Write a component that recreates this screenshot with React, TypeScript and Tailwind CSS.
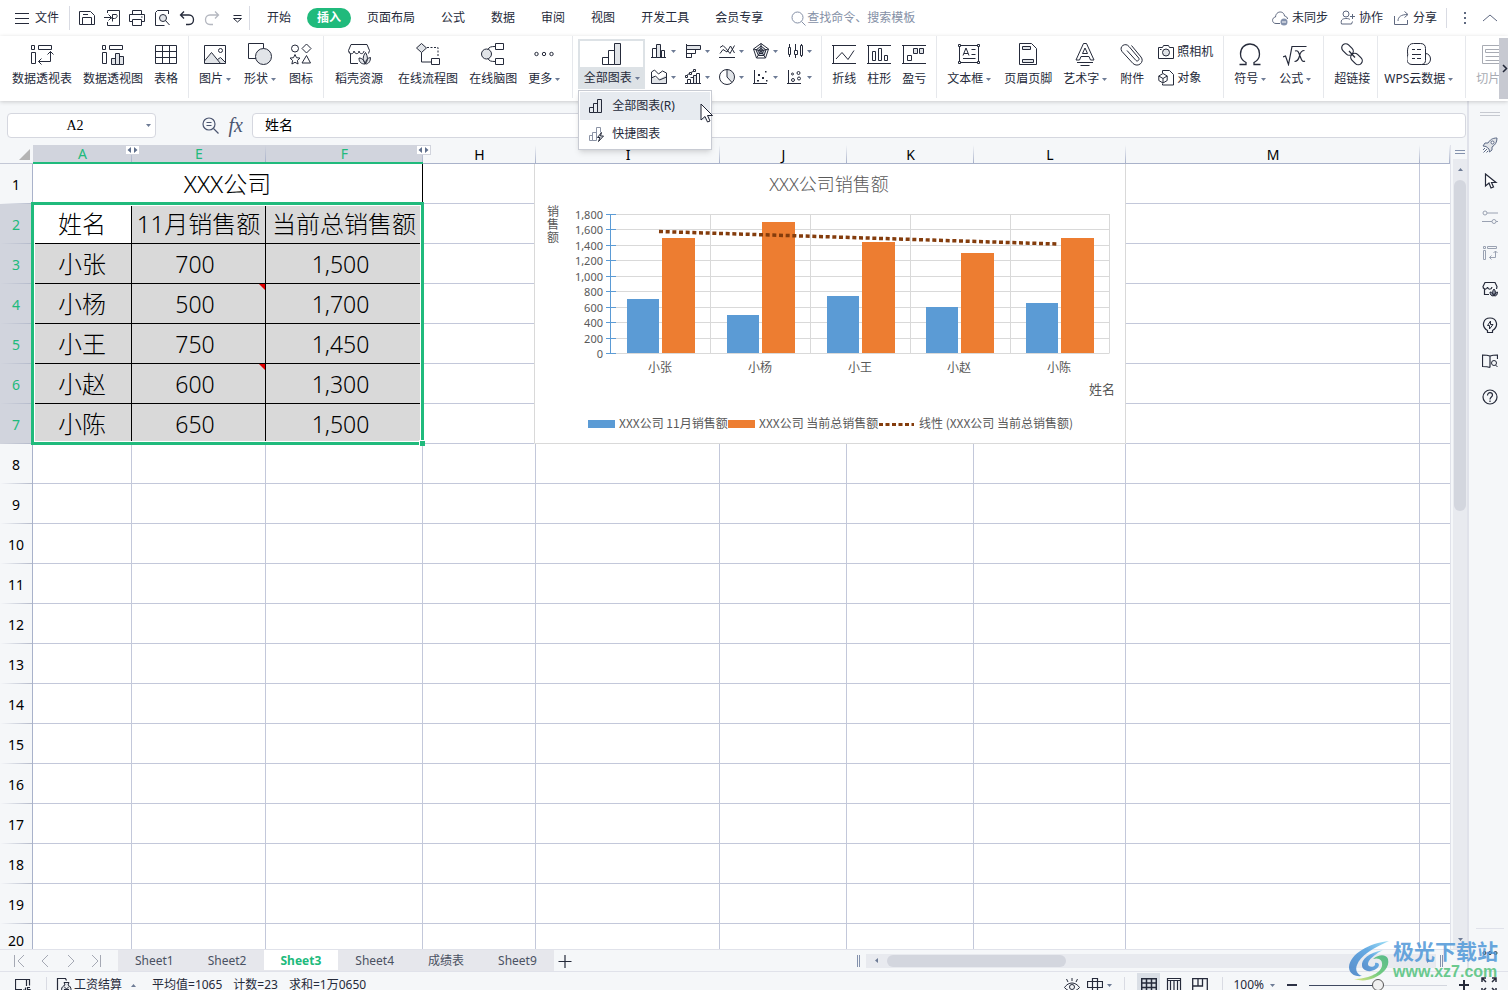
import type { ReactNode } from 'react';
import clsx from 'clsx';

const LIGHT = '#e1e4e8';

const COLUMNS = [
    { name: 'A', width: 99, selected: true, hiddenAfter: true },
    { name: 'E', width: 134, selected: true },
    { name: 'F', width: 157, selected: true, hiddenAfter: true },
    { name: 'H', width: 113 },
    { name: 'I', width: 184 },
    { name: 'J', width: 127 },
    { name: 'K', width: 127 },
    { name: 'L', width: 152 },
    { name: 'M', width: 294 },
    { name: '' },
];

const SALES = [
    { name: '小张', november: 700, total: 1500 },
    { name: '小杨', november: 500, total: 1700, note: true },
    { name: '小王', november: 750, total: 1450 },
    { name: '小赵', november: 600, total: 1300, note: true },
    { name: '小陈', november: 650, total: 1500 },
];

const ROWS = Array.from({ length: 20 }, (_, i) => i + 1);

const SHEETS = ['Sheet1', 'Sheet2', 'Sheet3', 'Sheet4', '成绩表', 'Sheet9'];

const TABS = ['开始', '插入', '页面布局', '公式', '数据', '审阅', '视图', '开发工具', '会员专享'];

interface IconProps {
    size?: number;
    className?: string;
    children: ReactNode;
}

function Icon({ size = 24, className, children }: IconProps) {
    return (
        <svg
            width={size}
            height={size}
            viewBox={`0 0 ${size} ${size}`}
            fill="none"
            stroke="currentColor"
            aria-hidden="true"
            className={clsx('shrink-0', className)}
        >
            {children}
        </svg>
    );
}

function Caret({ className }: { className?: string }) {
    return (
        <svg width="5" height="3" viewBox="0 0 5 3" aria-hidden="true" className={clsx('shrink-0 fill-[#6d7b95]', className)}>
            <path d="M0 0h5L2.5 3z" />
        </svg>
    );
}

const pivotFrame = (
    <>
        <path d="M1.5 3.5h3v4h-3zM8.5 3.5h13v4h-13z" />
        <path d="M1.5 10.5h4v11h-4z" />
    </>
);

const big = {
    pivotTable: (
        <>
            {pivotFrame}
            <path d="M20.5 9.5v10h-12M17.5 12.5l3-3 3 3M11.5 16.5l-3 3 3 3" />
        </>
    ),
    pivotChart: (
        <>
            {pivotFrame}
            <path fill={LIGHT} d="M10.5 16.5h4v6h-4zM14.5 11.5h4v11h-4zM18.5 14.5h4v8h-4z" />
        </>
    ),
    table: <path d="M1.5 3.5h21v18h-21zM1.5 9.5h21M1.5 15.5h21M8.5 3.5v18M15.5 3.5v18" />,
    image: (
        <>
            <path fill={LIGHT} stroke="none" d="M2 19.500L8.500 11l6 6.500 3-2 5 5v1H2z" />
            <path d="M1.5 3.5h21v18h-21zM1.5 19l7-8.500 9 11M14.500 17.500l3-2 5 5" />
            <circle cx="17.5" cy="8.500" r="2" />
        </>
    ),
    shape: (
        <>
            <path d="M.5 1.500h15v15H.5z" fill="#fff" />
            <circle cx="15.500" cy="14.500" r="8" fill={LIGHT} />
        </>
    ),
    symbols: (
        <>
            <circle cx="6" cy="6.500" r="3.500" />
            <path d="M17.500 2l4.500 4.500-4.500 4.500L13 6.500zM17.500 13.500l4 7.500h-8.500zM6 12.500l1.500 3.200 3.500.4-2.600 2.400.7 3.500L6 20.300 2.900 22l.7-3.500L1 16.100l3.500-.4z" />
        </>
    ),
    store: (
        <>
            <path d="M11 21.500H3.500v-10M2.500 11.500l-1-3 2.500-6h16l2.500 6-1 3M2 9.500c1 3 4.500 3 5-.5.800 3.500 5 3.500 5 0 .5 3.500 4.500 3.500 5 0" />
            <path fill={LIGHT} d="M18.500 21.500c-3-3-3-7 0-11 2.500 4 2.500 8 0 11zM18 22c-4 0-6-2-6-6 3 0 5.500 2.500 6 6zM18.500 22c0-4 2-6 5-6.500 0 4-2 6.500-5 6.500z" />
        </>
    ),
    flow: (
        <>
            <path fill={LIGHT} d="M5.500 1.500l5 4.500-5 4.500-5-4.500z" />
            <path d="M5.500 10.500v9.500h10" />
            <path strokeDasharray="2 1.500" d="M11 5.500h11v10" />
            <path d="M15.500 16.500h8v6h-8z" />
        </>
    ),
    mind: (
        <>
            <circle cx="5.500" cy="12" r="5" fill={LIGHT} />
            <path d="M7 7.500c1-2.500 3-3 7-3M7 16.500c1 2.500 3 3 7 3M14.500 1.500h8v6h-8zM14.500 16.500h8v6h-8z" />
        </>
    ),
    more: (
        <>
            <circle cx="4.500" cy="12" r="1.700" />
            <circle cx="12" cy="12" r="1.700" />
            <circle cx="19.500" cy="12" r="1.700" />
        </>
    ),
    allCharts: (
        <>
            <path d="M2.500 15.500h6v7h-6zM8.500 8.500h6v14h-6z" />
            <path fill={LIGHT} d="M14.500 1.500h6v21h-6z" />
        </>
    ),
    sparkLine: <path d="M1.500 21.500V3.500M0 3.500h24M0 21.500h24M4 17l6-6.500 6 7L22 8.500" />,
    sparkColumn: <path d="M1.500 22V3.500M0 3.500h24M0 21.500h24M5.500 18.500v-9h3v9zM11.500 18.500v-12h3v12zM17.500 18.500v-5h3v5z" />,
    winLoss: (
        <>
            <path d="M1.500 22V3.500M0 3.500h24M0 21.500h24M5.500 13.500h4v5h-4z" />
            <path fill={LIGHT} d="M11.500 6.500h4v5h-4zM17.500 6.500h4v5h-4z" />
        </>
    ),
    textBox: (
        <>
            <path d="M2.500 3.500h19v17h-19zM6 13.500l3-7.500 3 7.500M7 11.500h4M14.500 7.500h4M14.500 12.500h4M6 16.500h12.500" />
            <path fill="#fff" d="M1.500 2.500h2v2h-2zM20.500 2.500h2v2h-2zM1.500 19.500h2v2h-2zM20.500 19.500h2v2h-2z" />
        </>
    ),
    headerFooter: (
        <>
            <path d="M3.500 1.500h12l5 5v16h-17z" />
            <path fill={LIGHT} d="M6.500 4.500h8v3h-8zM6.500 17.500h11v3h-11z" />
        </>
    ),
    wordArt: <path d="M3 18l7.500-16.500h3L21 18h-3.500l-1.500-3.500H8L6.500 18zM9.500 11.500h5L12 6zM4 20.500h16M7.500 23.500h9" />,
    clip: <path d="M7 8.500l9 10c1.500 1.500 4-.8 2.700-2.500L9 4.500C5.500 0 -1.500 4.500 2 9.500l11 12c5 4.500 12-1.500 8-6.500L11.500 3.500" />,
    omega: <path strokeWidth="1.300" d="M1.500 22.500H8v-2C4 18.500 2.500 15.500 2.500 12c0-6 4-10 9.500-10s9.500 4 9.500 10c0 3.500-1.500 6.500-5.500 8.500v2h6.500" />,
    formula: <path strokeWidth="1.200" d="M0 15l2.500-1 3 8.500L9 4.500h14.500M12 9c3-1 3.500 1 5 5s2.500 6.500 5 5M21.500 8.500c-3 0-4.500 3-5 5.500-.8 3-2.500 5.500-5 5.500" />,
    link: (
        <g strokeWidth="1.200">
            <rect x="1" y="3.500" width="13" height="8" rx="4" transform="rotate(45 7.500 7.500)" />
            <rect x="10" y="13" width="13" height="8" rx="4" transform="rotate(45 16.500 17)" />
            <path d="M9 9l6 6.500" />
        </g>
    ),
    cloudData: (
        <>
            <path d="M6.500 1.500h7c3.500 0 5 2 5 5v12c0 2-1.500 4-4 4H5c-3 0-5-2-5-5 0-2 0-3 .8-4.500C0 8 .500 1.500 6.500 1.500zM18.500 11.500c3 0 5 2.500 5 5.500s-2 5.500-5 5.500h-4" />
            <path d="M5 7.500h3M10 7.500h4M5 12.500h9M5 16.500h3M10 16.500h4" />
        </>
    ),
    slicer: <path d="M23.500 3.500h-17v18h17M9.500 7.500h14M9.500 7.500v3h14M9.500 14.500h14M9.500 18.500h14" />,
};

const small = {
    column: (
        <>
            <path d="M1.500 5.500h4v9h-4zM10.500 7.500h3v7h-3zM0 14.500h15" />
            <path fill={LIGHT} d="M5.500 1.500h4v13h-4z" />
        </>
    ),
    bar: (
        <>
            <path d="M1.500 1v14M1.500 6.500h9v4h-9zM1.500 10.500h5v4h-5z" />
            <path fill={LIGHT} d="M1.500 2.500h14v4h-14z" />
        </>
    ),
    line: <path d="M0 14.500h16M1 10.500l3-4L8 9l3.500-6 4 7M1 4.500l3-2 3 3 4 5 4.500-8" />,
    radar: (
        <>
            <path fill="#c9ced6" d="M8 3l5 4-2 5.500H5.500L3 7z" />
            <path d="M8 .5l7.500 5.500-3 9h-9l-3-9zM8 .5V8M.5 6L8 8l7.500-2M3.500 15L8 8l4.500 7M8 5.500l2.500 2-1 3h-3l-1-3z" />
        </>
    ),
    stock: <path d="M2.500 1v3M2.500 11v3M1.500 4.500h2v7h-2zM8.500 1v6M8.500 12v3M7.500 7.500h3v4h-3zM14.500 1v2M14.500 12v2M13.500 2.500h2v10h-2z" />,
    area: (
        <>
            <path fill={LIGHT} stroke="none" d="M1 6l5 4 4-1 5-3v9H1z" />
            <path d="M.5 14.500V3l3-2 4 4 4-3 4 2v10.500zM.5 9l4-2 4 4 7-3" />
        </>
    ),
    combo: (
        <>
            <path d="M2.500 10.500h3v4h-3zM5.500 8.500h3v6h-3M11.500 4.500h3v10h-3zM0 14.500h16M1 7l4-3 4-2" />
            <path fill={LIGHT} d="M8.500 6.500h3v8h-3z" />
            <path fill="#fff" d="M.5 6.500h2v2h-2zM4.500 3.500h2v2h-2zM8.500.5h2v2h-2z" />
        </>
    ),
    pie: (
        <>
            <path fill={LIGHT} stroke="none" d="M8 0a8 8 0 0 1 5 13L8 8z" />
            <circle cx="8" cy="8" r="7.500" />
            <path d="M8 .5V8l5 5.500" />
        </>
    ),
    scatter: (
        <>
            <path d="M1.500 1v14M0 14.500h14" />
            <path fill="currentColor" stroke="none" d="M5 5h2v2H5zM12 2h1.500v1.500H12zM9 8h2v2H9zM4 11h2v1.500H4zM13 11h1.500v1.500H13z" />
        </>
    ),
    bubble: (
        <>
            <path d="M1.500 1v14M0 14.500h14" />
            <circle cx="5.500" cy="5" r="1" />
            <circle cx="11.500" cy="4" r="1.500" />
            <circle cx="6" cy="11" r="1.500" />
            <circle cx="12" cy="9.500" r="1.500" />
        </>
    ),
    camera: (
        <>
            <path d="M.5 3.500h4l1-2h5l1 2h4v11H.5zM2 5.500h1.500" />
            <circle cx="8" cy="8.500" r="3.500" fill={LIGHT} />
        </>
    ),
    object: (
        <path d="M4.500 3V.5h7l4 4v10.500H4.500V13.500M.8 6l4.200-2.500L9.200 6v4.500L5 13l-4.200-2.500zM.8 6L5 8.500 9.200 6M5 8.500V13" />
    ),
    save: <path d="M.5 1.500h11l4 4v9H.5zM3.500 14v-6.500h9V14M4 4.500h5" />,
    exportPdf: <path d="M3.500 3V.5h12v15h-12V12M0 7.500h7M4.500 4.500l3 3-3 3M8.500 11.500V4.500h4c1.500 1.500 0 4-2 4H7.500" />,
    print: <path d="M3.500 4.500v-4h9v4M3.500 11.500h-3v-7h15v7h-3M3.500 9.500h9v6h-9zM12 7h1.500" />,
    preview: (
        <>
            <path d="M14.500 4V.5h-11l-2 2v13h9" />
            <circle cx="9" cy="8" r="3.500" fill={LIGHT} />
            <path d="M11.500 10.500l4 4.500" />
        </>
    ),
    undo: <path strokeWidth="1.300" d="M5 1.500L1.500 5 5 8.500M1.500 5H10c6 0 6 9.500 0 9.500H7" />,
    redo: <path strokeWidth="1.300" d="M11 1.500L14.500 5 11 8.500M14.500 5H6C0 5 0 14.500 6 14.500h3" />,
    customize: <path d="M4.500 5.500h8M4.500 8.500l4 3.500 4-3.500z" />,
    cloud: (
        <>
            <path d="M8 13.500H4c-4.500 0-4.500-6-.5-6.500C4 .500 12 .500 12.500 6c2 .5 3 1.500 3 3" />
            <circle cx="12" cy="12" r="3.500" fill="#8492ad" stroke="none" />
            <path stroke="#fff" d="M10 12h4" />
        </>
    ),
    people: (
        <>
            <circle cx="6" cy="4" r="3" />
            <path d="M10 9.500c-1-.7-2-1-4-1-2 0-6 .5-4.500 5.500h10l1-2.500M10 6.500h5M12.500 4v5" />
        </>
    ),
    share: <path d="M.5 6v8.500h13V10M4 11c0-4 3-6.500 9.500-6.500M10.500 1.500l3.500 3-3.500 3" />,
    quickChart: (
        <>
            <path stroke="#8b93a5" d="M1.500 9.500h3v5h-3zM4.500 6.500h4v8h-4zM8.500 8V1.500h4v5" />
            <path fill={LIGHT} d="M13.500 6.500l-4 5h2.500l-1.500 4 5-5.500h-3z" />
        </>
    ),
    chart: (
        <>
            <path d="M1.500 9.500h4v5h-4zM5.500 5.500h4v9h-4z" />
            <path fill={LIGHT} d="M9.500 1.500h4v13h-4z" />
        </>
    ),
    rocket: (
        <>
            <path fill={LIGHT} d="M15 1c-5 0-7 2-9 5H3L1 9l3 .5L7 12l.5 3 2.500-2v-3c3-2 5-4.500 5-9z" />
            <circle cx="10.500" cy="5.500" r="1.500" fill="#fff" />
            <path d="M1 13l2-2M1.500 15.500l3.500-3.500M4.500 15.500l1.500-1.500" />
        </>
    ),
    pointer: <path strokeWidth="1.200" fill="#fff" d="M3.500 1v12l3.500-3 2 5 2.500-1-2-4.500H14z" />,
    sliders: (
        <>
            <circle cx="3" cy="4" r="2" />
            <circle cx="12" cy="12.500" r="2" />
            <path d="M5 4h11M0 12.500h10M14 12.500h2" />
        </>
    ),
    analysis: <path d="M1.500 1.500h2v2h-2zM5.500 1.500h9v2h-9zM1.500 5.500h2v9h-2zM13.500 6v6.500h-6M11.500 8l2-2 2 2M9.500 10.500l-2 2 2 2" />,
    shop: (
        <>
            <path strokeWidth="1.200" d="M7 13.500H2.500V8M1.500 7.500l-.5-2 2-4h10l2 4-.5 2.500M1 6c1 3 4 2.500 4.500 0 .5 3 4 3 4.500 0" />
            <path fill="#8a90a0" d="M12 14.500c-2-2-2-4 0-6.500 2 2.500 2 4.500 0 6.500zM11.500 15c-2.500 0-3.500-1.500-3.500-4 2 0 3.500 1.500 3.500 4zM12.500 15c0-2.500 1-3.500 3-4 0 2.500-1 4-3 4z" />
        </>
    ),
    bulb: (
        <>
            <path strokeWidth="1.200" d="M5.500 15.500v-2C-1.500 9 1.500 1 8 1s9.500 8 2.500 12.500v2z" />
            <path d="M8.500 4l-3 4.500h2V12L11 7.500H8.500z" />
        </>
    ),
    book: (
        <>
            <path strokeWidth="1.200" d="M8 3c-2.500-1-5-1-7.500-1v11.500c3 0 5 0 7.500 1M8 3c2.500-1 5-1 7.500-1v4M8 3v11.500" />
            <circle cx="12" cy="10" r="2.500" />
            <path d="M13.500 12l2 2" />
        </>
    ),
    help: (
        <>
            <circle cx="8" cy="8" r="7" strokeWidth="1.200" />
            <path strokeWidth="1.200" d="M5.500 6.500c0-4 5-3.500 5-.5 0 2-2.500 2-2.500 4.500M8 11.500V13" />
        </>
    ),
    eye: (
        <>
            <path d="M.5 10.500c4-6 11-6 15 0-4 5-11 5-15 0zM8 1v3M2.500 2L4 5M13.500 2L12 5" />
            <circle cx="8" cy="10" r="2.500" />
        </>
    ),
    cross: <path strokeWidth="1.200" d="M5.500 1.500h5v13h-5zM.5 4.500h15v6H.5z" />,
    gridView: <path strokeWidth="1.500" d="M.7 1.700h14.600v13H.7zM.7 6h14.600M.7 10.500h14.600M5.500 1.700v13M10.500 1.700v13" />,
    pageView: <path strokeWidth="1.200" d="M1.500 16V1.500h13V16M1.500 3.500h13M4.500 16V3.500M8 16V3.500M11.500 16V3.500" />,
    breakView: <path strokeWidth="1.300" d="M.7 1.700h14.600v13H.7zM.7 9h9.800V1.700M6 1.700V9" />,
    expand: <path strokeWidth="1.500" d="M1 5V1h4M1 1l4 4M11 1h4v4M15 1l-4 4M1 11v4h4M1 15l4-4M11 15h4v-4M15 15l-4-4" />,
    script: <path strokeWidth="1.200" d="M7 12.500H.5v-10h14v6M11.500 2v7M8.500 12.500l2 2v-4M15 10.500h-2.500v2H15v2.500h-3" />,
    wage: (
        <>
            <path strokeWidth="1.200" d="M4.500 15.500h-3v-14h8l1 2" />
            <path fill={LIGHT} d="M8 5.500h5l-1 2.500c4 2 4 7 0 7.500H8.500c-4-1-4-5.500.500-7.500zM8 9.500l2.500 2.500L13 9.500M8 12.500h5M10.500 12v3" />
        </>
    ),
};

type BigIcon = keyof typeof big;
type SmallIcon = keyof typeof small;

interface RibbonItemProps {
    icon: BigIcon;
    label: string;
    menu?: boolean;
    className?: string;
}

function RibbonItem({ icon, label, menu, className }: RibbonItemProps) {
    return (
        <button type="button" className={clsx('flex shrink-0 flex-col items-center pt-1.5', menu && 'mr-0.5', className)}>
            <Icon>{big[icon]}</Icon>
            <span className="mt-[5px] flex items-center gap-[3px] leading-4 whitespace-nowrap">
                {label}
                {menu && <Caret />}
            </span>
        </button>
    );
}

function Group({ children, className }: { children: ReactNode; className?: string }) {
    return (
        <div className={clsx('flex h-[62px] shrink-0 gap-[11px] border-r border-[#e6e8ec]', className ?? 'px-2.5')}>
            {children}
        </div>
    );
}

function Divider({ className }: { className?: string }) {
    return <div className={clsx('w-px shrink-0 bg-[#d9dbe3]', className)} />;
}

function TopBar() {
    const quick: { icon: SmallIcon; label: string; dim?: boolean }[] = [
        { icon: 'save', label: '保存' },
        { icon: 'exportPdf', label: '输出为PDF' },
        { icon: 'print', label: '打印' },
        { icon: 'preview', label: '打印预览' },
        { icon: 'undo', label: '撤消' },
        { icon: 'redo', label: '恢复', dim: true },
        { icon: 'customize', label: '自定义快速访问工具栏' },
    ];

    return (
        <header className="flex h-9 shrink-0 items-center bg-white whitespace-nowrap">
            <button type="button" className="flex items-center gap-1.5 pr-2.5 pl-[15px]">
                <Icon size={14}>
                    <path d="M0 2.500h14M0 7.500h14M0 12.500h14" />
                </Icon>
                文件
            </button>
            <Divider className="mr-1 h-6" />
            {quick.map((item) => (
                <button
                    key={item.icon}
                    type="button"
                    aria-label={item.label}
                    className={clsx('flex w-[25px] shrink-0 justify-center', item.dim && 'text-[#b5b8c0]')}
                >
                    <Icon size={16}>{small[item.icon]}</Icon>
                </button>
            ))}
            <Divider className="mr-1 h-6" />
            <nav className="flex items-center">
                {TABS.map((tab) => (
                    <button
                        key={tab}
                        type="button"
                        className={clsx(
                            'h-5 shrink-0 leading-5',
                            tab === '插入' ? 'mx-[3px] rounded-full bg-[#20ba7c] px-2.5 font-bold text-white' : 'px-[13px]',
                        )}
                    >
                        {tab}
                    </button>
                ))}
            </nav>
            <label className="ml-[15px] flex items-center gap-px text-[#8590a6]">
                <Icon size={15}>
                    <circle cx="6.500" cy="6.500" r="5.500" />
                    <path d="M10.500 10.500l4 4" />
                </Icon>
                <input
                    type="text"
                    placeholder="查找命令、搜索模板"
                    className="w-32 bg-transparent outline-none placeholder:text-[#8590a6]"
                />
            </label>
            <div className="ml-auto flex items-center">
                <button type="button" className="mr-3 flex items-center gap-1">
                    <Icon size={16} className="text-[#5f6980]">{small.cloud}</Icon>
                    未同步
                </button>
                <button type="button" className="mr-[11px] flex items-center gap-[3px]">
                    <Icon size={16} className="text-[#5f6980]">{small.people}</Icon>
                    协作
                </button>
                <button type="button" className="mr-[9px] flex items-center gap-[3px]">
                    <Icon size={16} className="text-[#5f6980]">{small.share}</Icon>
                    分享
                </button>
                <Divider className="h-5" />
                <button type="button" aria-label="更多选项" className="flex w-9 justify-center">
                    <svg width="2" height="14" viewBox="0 0 2 14" className="fill-[#5f6980]">
                        <path d="M0 1h2v2H0zM0 6h2v2H0zM0 11h2v2H0z" />
                    </svg>
                </button>
                <button type="button" aria-label="折叠功能区" className="mr-[11px] text-[#5f6980]">
                    <Icon size={14}>
                        <path d="M0 10l7-6 7 6" />
                    </Icon>
                </button>
            </div>
        </header>
    );
}

function ChartMenu() {
    return (
        <div className="relative mr-1.5 ml-[5px] h-[52px] w-[67px] shrink-0">
            <button
                type="button"
                aria-haspopup="menu"
                aria-expanded="true"
                className="mt-[3px] flex h-[50px] w-full flex-col items-center border-2 border-b-0 border-[#dde2e6] pt-px"
            >
                <Icon>{big.allCharts}</Icon>
                <span className="mt-px flex w-full flex-1 items-center justify-center gap-[3px] bg-[#dde2e6] leading-4">
                    全部图表
                    <Caret />
                </span>
            </button>
            <div
                role="menu"
                className="absolute top-[54px] left-0 z-20 w-[134px] border border-[#c8cbd3] bg-white p-px shadow-md"
            >
                <button type="button" role="menuitem" className="flex h-7 w-full items-center gap-2 bg-[#e7ebf0] pl-2">
                    <Icon size={16}>{small.chart}</Icon>
                    全部图表(R)
                </button>
                <button type="button" role="menuitem" className="flex h-7 w-full items-center gap-2 pl-2">
                    <Icon size={16}>{small.quickChart}</Icon>
                    快捷图表
                </button>
                <svg width="13" height="20" viewBox="0 0 13 20" className="absolute top-3 left-[121px]" aria-hidden="true">
                    <path d="M1 1v16l4-3.500L7.500 19l2.500-1-2.500-5.500H12.500z" fill="#fff" stroke="#1f2333" />
                </svg>
            </div>
        </div>
    );
}

function Ribbon() {
    const charts: { icon: SmallIcon; label: string }[] = [
        { icon: 'column', label: '柱形图' },
        { icon: 'bar', label: '条形图' },
        { icon: 'line', label: '折线图' },
        { icon: 'radar', label: '雷达图' },
        { icon: 'stock', label: '股价图' },
        { icon: 'area', label: '面积图' },
        { icon: 'combo', label: '组合图' },
        { icon: 'pie', label: '饼图' },
        { icon: 'scatter', label: '散点图' },
        { icon: 'bubble', label: '气泡图' },
    ];

    return (
        <div className="relative z-10 flex h-[65px] shrink-0 bg-white shadow-[0_1px_4px_rgba(0,0,0,0.18)]">
            <Group className="pr-2.5 pl-3">
                <RibbonItem icon="pivotTable" label="数据透视表" />
                <RibbonItem icon="pivotChart" label="数据透视图" />
                <RibbonItem icon="table" label="表格" />
            </Group>
            <Group>
                <RibbonItem icon="image" label="图片" menu />
                <RibbonItem icon="shape" label="形状" menu />
                <RibbonItem icon="symbols" label="图标" />
            </Group>
            <Group className="pr-2.5 pl-[11px]">
                <RibbonItem icon="store" label="稻壳资源" className="mr-1" />
                <RibbonItem icon="flow" label="在线流程图" />
                <RibbonItem icon="mind" label="在线脑图" />
                <RibbonItem icon="more" label="更多" menu />
            </Group>
            <Group className="px-0">
                <div className="flex">
                    <ChartMenu />
                    <div className="grid grid-cols-5 content-start gap-y-2.5 pt-[7px]">
                        {charts.map((chart) => (
                            <button
                                key={chart.icon}
                                type="button"
                                aria-label={chart.label}
                                className="flex w-[34px] items-center gap-1"
                            >
                                <Icon size={16}>{small[chart.icon]}</Icon>
                                <Caret />
                            </button>
                        ))}
                    </div>
                </div>
            </Group>
            <Group>
                <RibbonItem icon="sparkLine" label="折线" />
                <RibbonItem icon="sparkColumn" label="柱形" />
                <RibbonItem icon="winLoss" label="盈亏" />
            </Group>
            <Group>
                <RibbonItem icon="textBox" label="文本框" menu />
                <RibbonItem icon="headerFooter" label="页眉页脚" />
                <RibbonItem icon="wordArt" label="艺术字" menu />
                <RibbonItem icon="clip" label="附件" className="mr-[3px]" />
                <div className="flex shrink-0 flex-col gap-2.5 pt-2 whitespace-nowrap">
                    <button type="button" className="flex items-center gap-[3px] leading-4">
                        <Icon size={16}>{small.camera}</Icon>
                        照相机
                    </button>
                    <button type="button" className="flex items-center gap-[3px] leading-4">
                        <Icon size={16}>{small.object}</Icon>
                        对象
                    </button>
                </div>
            </Group>
            <Group>
                <RibbonItem icon="omega" label="符号" menu />
                <RibbonItem icon="formula" label="公式" menu />
            </Group>
            <Group className="pr-[7px] pl-2.5">
                <RibbonItem icon="link" label="超链接" />
            </Group>
            <Group className="pr-2.5 pl-1.5">
                <RibbonItem icon="cloudData" label="WPS云数据" menu />
            </Group>
            <div className="flex min-w-0 flex-1 items-start overflow-hidden pl-2.5 text-[#a8abb3]">
                <RibbonItem icon="slicer" label="切片" />
            </div>
            <button type="button" aria-label="向右滚动" className="my-0.5 w-[9px] shrink-0 bg-[#c7c9d1]">
                <svg width="9" height="9" viewBox="0 0 9 9" fill="none" stroke="#222738" strokeWidth="1.500">
                    <path d="M4 1l3.500 3.500L4 8" />
                </svg>
            </button>
        </div>
    );
}

function FormulaBar() {
    return (
        <div className="flex h-11 shrink-0 items-start pt-3 pr-px pl-[7px]">
            <div className="flex h-[25px] w-[149px] items-center rounded-sm border border-[#d5d7df] bg-white pr-1">
                <input
                    aria-label="名称框"
                    defaultValue="A2"
                    className="w-full min-w-0 bg-transparent pr-1 text-center font-['Liberation_Serif',serif] text-sm text-black outline-none"
                />
                <button type="button" aria-label="展开名称框">
                    <Caret />
                </button>
            </div>
            <div className="flex h-6 w-24 items-center justify-end gap-2.5 pr-[9px] text-[#4b5570]">
                <button type="button" aria-label="浏览公式结果">
                    <Icon size={17}>
                        <circle cx="7" cy="7" r="6" strokeWidth="1.200" />
                        <path strokeWidth="1.200" d="M11.500 11.500l5 5M4.500 5.500h5M4.500 8.500h5" />
                    </Icon>
                </button>
                <button type="button" className="font-['Liberation_Serif',serif] text-xl leading-6 italic">
                    fx
                </button>
            </div>
            <input
                aria-label="编辑栏"
                defaultValue="姓名"
                className="h-[25px] min-w-0 flex-1 rounded-sm border border-[#d5d7df] bg-white px-3 pb-1 text-sm text-black outline-none"
            />
        </div>
    );
}

function SalesChart() {
    const bottom = 189;
    const scale = 139 / 1800;
    const ticks = Array.from({ length: 10 }, (_, i) => i * 200);

    return (
        <svg
            width="592"
            height="280"
            viewBox="0 0 592 280"
            role="img"
            aria-label="XXX公司销售额"
            className="absolute top-[19px] left-[534px] bg-white"
            fill="#595959"
            fontSize="12"
        >
            <path d="M.5 0v279.500h591V0" fill="none" stroke="#d9d9d9" />
            <text x="295" y="27" textAnchor="middle" fontSize="18" fontWeight="300">
                XXX公司销售额
            </text>
            {['销', '售', '额'].map((char, i) => (
                <text key={char} x="13" y={52 + i * 13} className="leading-3">
                    {char}
                </text>
            ))}
            {ticks.map((tick) => {
                const y = Math.round(bottom - tick * scale) + 0.5;
                return (
                    <g key={tick}>
                        <path d={`M77 ${y}H575.500`} stroke="#d9d9d9" />
                        <path d={`M72 ${y}H82`} stroke="#5b9bd5" />
                        <text x="69" y={y + 4} textAnchor="end" fontSize="11">
                            {tick.toLocaleString('en-US')}
                        </text>
                    </g>
                );
            })}
            <path d="M176.500 50v139M276.500 50v139M376.500 50v139M476.500 50v139M575.500 50v139" stroke="#d9d9d9" />
            <path d="M76.500 50v140" stroke="#5b9bd5" />
            {SALES.map((row, i) => {
                const x = Math.round(93 + i * 99.8);
                const november = Math.floor(row.november * scale);
                const total = Math.floor(row.total * scale);
                return (
                    <g key={row.name}>
                        <rect x={x} y={bottom - november} width="32" height={november} fill="#5b9bd5" />
                        <rect x={x + 35} y={bottom - total} width="33" height={total} fill="#ed7d31" />
                        <text x={x + 33} y="208" textAnchor="middle">
                            {row.name}
                        </text>
                    </g>
                );
            })}
            <path d="M125 67.500L523 80" stroke="#843c0c" strokeWidth="3.500" strokeDasharray="4 2.670" />
            <text x="555" y="230" fontSize="13">
                姓名
            </text>
            <g className="font-['Noto_Sans_CJK_SC',sans-serif]">
                <rect x="54" y="256" width="27" height="8" fill="#5b9bd5" />
                <text x="85" y="264">XXX公司 11月销售额</text>
                <rect x="194" y="256" width="27" height="8" fill="#ed7d31" />
                <text x="225" y="264">XXX公司 当前总销售额</text>
                <path d="M345 260.500h35" stroke="#843c0c" strokeWidth="3" strokeDasharray="4 2.500" />
                <text x="385" y="264">线性 (XXX公司 当前总销售额)</text>
            </g>
        </svg>
    );
}

function DataCells({ row }: { row: number }) {
    const cell = 'border-r border-b border-black p-0 text-center font-light whitespace-nowrap text-black';

    if (row === 1) {
        return (
            <td colSpan={3} className={clsx(cell, 'text-2xl')}>
                XXX公司
            </td>
        );
    }
    if (row === 2) {
        return (
            <>
                <td className={clsx(cell, 'bg-white text-2xl')}>姓名</td>
                <td className={clsx(cell, 'bg-[#d9d9d9] text-2xl')}>11月销售额</td>
                <td className={clsx(cell, 'bg-[#d9d9d9] text-2xl')}>当前总销售额</td>
            </>
        );
    }

    const sale = SALES[row - 3];
    return (
        <>
            <td className={clsx(cell, 'bg-[#d9d9d9] text-2xl')}>{sale.name}</td>
            <td className={clsx(cell, 'relative bg-[#d9d9d9] text-[23px] leading-8')}>
                <span className="pr-[7px]">{sale.november}</span>
                {sale.note && (
                    <svg width="6" height="6" viewBox="0 0 6 6" className="absolute top-0 right-0 fill-[#e00000]">
                        <path d="M0 0h6v6z" />
                    </svg>
                )}
            </td>
            <td className={clsx(cell, 'bg-[#d9d9d9] text-[23px] leading-8')}>
                <span className="pr-[7px]">{sale.total.toLocaleString('en-US')}</span>
            </td>
        </>
    );
}

function Grid() {
    return (
        <div className="relative min-w-0 flex-1 overflow-hidden bg-white">
            <table className="w-full table-fixed border-separate border-spacing-0">
                <colgroup>
                    <col className="w-[33px]" />
                    {COLUMNS.map((col) => (
                        <col key={col.name} style={{ width: col.width }} />
                    ))}
                </colgroup>
                <thead>
                    <tr className="h-[19px]">
                        <th className="relative border-b border-[#c3c8d6] bg-[#f5f7f9] p-0">
                            <svg width="11" height="11" viewBox="0 0 11 11" className="absolute right-[3px] bottom-[3px] fill-[#b4b4b4]">
                                <path d="M11 0v11H0z" />
                            </svg>
                        </th>
                        {COLUMNS.map((col) => (
                            <th
                                key={col.name}
                                scope="col"
                                className={clsx(
                                    'relative bg-[linear-gradient(to_bottom,transparent,#a9b2ca)] bg-[length:1px_100%] bg-right bg-no-repeat p-0 pt-px text-sm leading-4 font-normal',
                                    col.selected
                                        ? 'border-b-2 border-[#20ba7c] bg-[#d1d4dd] text-[#20ba7c]'
                                        : 'border-b border-[#a9b2ca] bg-[#f5f7f9] text-black',
                                )}
                            >
                                {col.name}
                                {col.hiddenAfter && (
                                    <svg
                                        width="13"
                                        height="8"
                                        viewBox="0 0 13 8"
                                        className="absolute top-0 -right-2 z-10 box-content border border-[#d1d4dd] bg-white fill-[#5f6f8c]"
                                    >
                                        <path d="M5 1v6L1.500 4zM8 1v6L11.500 4z" />
                                    </svg>
                                )}
                            </th>
                        ))}
                    </tr>
                </thead>
                <tbody>
                    {ROWS.map((row) => {
                        const selected = row >= 2 && row <= 7;
                        return (
                            <tr key={row} className={row === 20 ? 'h-8' : 'h-10'}>
                                <th
                                    scope="row"
                                    className={clsx(
                                        'border-r border-[#a9b2ca] bg-[linear-gradient(to_right,transparent,#b4bacb)] bg-[length:100%_1px] bg-bottom bg-no-repeat p-0 pt-px text-sm font-normal',
                                        selected ? 'bg-[#d1d4dd] text-[#20ba7c]' : 'bg-[#f5f7f9] text-black',
                                    )}
                                >
                                    {row}
                                </th>
                                {row <= 7 && <DataCells row={row} />}
                                {COLUMNS.slice(row <= 7 ? 3 : 0).map((col) => (
                                    <td
                                        key={col.name}
                                        className={clsx('border-b border-[#c3c8da] p-0', col.name && 'border-r')}
                                    />
                                ))}
                            </tr>
                        );
                    })}
                </tbody>
            </table>
            <div className="pointer-events-none absolute top-[57px] left-[31px] h-[243px] w-[393px] border-3 border-[#20ba7c] shadow-[inset_0_0_0_1px_#fff]">
                <div className="absolute -right-1 -bottom-1 size-[6px] border-t border-l border-white bg-[#20ba7c]" />
            </div>
            <SalesChart />
        </div>
    );
}

function VerticalScroll() {
    return (
        <div className="flex w-[17px] shrink-0 flex-col border-l border-[#e0e2ea] pl-0.5">
            <div className="mx-0.5 mt-[5px] mb-[5px] h-1 border-y border-[#8492ad]" />
            <div className="flex min-h-0 flex-1 flex-col bg-[#e8eaef]">
                <button type="button" aria-label="向上滚动" className="flex h-[21px] items-center justify-center">
                    <Caret className="rotate-180" />
                </button>
                <div className="mx-px h-[331px] rounded-full bg-[#d3d6de]" />
                <button type="button" aria-label="向下滚动" className="mt-auto flex h-5 items-center justify-center">
                    <Caret />
                </button>
            </div>
        </div>
    );
}

function SheetBar() {
    const nav = [
        { label: '第一张', d: 'M2.500 1v12M12 1L6 7l6 6' },
        { label: '上一张', d: 'M10 1L4 7l6 6' },
        { label: '下一张', d: 'M4 1l6 6-6 6' },
        { label: '最后一张', d: 'M2 1l6 6-6 6M10.500 1v12' },
    ];

    return (
        <div className="flex h-[22px] shrink-0 items-stretch border-t border-[#e0e2ea]">
            <div className="flex w-[118px] items-center gap-3 pl-3">
                {nav.map((item) => (
                    <button key={item.label} type="button" aria-label={item.label} className="text-[#a5a9b4]">
                        <Icon size={14}>
                            <path d={item.d} />
                        </Icon>
                    </button>
                ))}
            </div>
            <div role="tablist" className="flex bg-[#e6e7ec]">
                {SHEETS.map((sheet) => (
                    <button
                        key={sheet}
                        type="button"
                        role="tab"
                        aria-selected={sheet === 'Sheet3'}
                        className={clsx(
                            'mb-px px-[17px] pt-0.5',
                            sheet === 'Sheet3' ? 'bg-white font-bold text-[#20ba7c]' : 'text-[#4a5162]',
                        )}
                    >
                        {sheet}
                    </button>
                ))}
            </div>
            <button type="button" aria-label="新建工作表" className="px-1">
                <Icon size={14}>
                    <path strokeWidth="1.200" d="M7 1v13M.5 7.500h13" />
                </Icon>
            </button>
            <div className="ml-auto flex w-[42%] items-center pr-6 pl-1.5">
                <div className="mr-1.5 h-3 w-[3px] border-x border-[#8492ad]" />
                <div className="flex h-3.5 flex-1 items-center bg-[#e8eaef]">
                    <button type="button" aria-label="向左滚动" className="flex w-[21px] justify-center">
                        <Caret className="rotate-90" />
                    </button>
                    <div className="h-3 w-[179px] rounded-full bg-[#d3d6de]" />
                    <button type="button" aria-label="向右滚动" className="ml-auto flex w-4 justify-center">
                        <Caret className="-rotate-90" />
                    </button>
                </div>
                <div className="ml-1 h-3 w-[3px] border-x border-[#8492ad]" />
            </div>
        </div>
    );
}

function SideBar() {
    const tools: { icon: SmallIcon; label: string; color?: string }[] = [
        { icon: 'rocket', label: '推荐', color: 'text-[#5c6a86]' },
        { icon: 'pointer', label: '选择' },
        { icon: 'sliders', label: '属性', color: 'text-[#9aa2b2]' },
        { icon: 'analysis', label: '分析', color: 'text-[#9aa2b2]' },
        { icon: 'shop', label: '稻壳' },
        { icon: 'bulb', label: '技巧' },
        { icon: 'book', label: '学习' },
        { icon: 'help', label: '帮助' },
    ];

    return (
        <aside className="flex w-[41px] shrink-0 flex-col items-center border-l-2 border-[#e0e2ea] pl-0.5">
            <div className="mt-[11px] h-1 w-5 border-y border-[#c6c9d0]" />
            <div className="mt-[21px] flex flex-col gap-5">
                {tools.map((tool) => (
                    <button key={tool.icon} type="button" aria-label={tool.label} className={tool.color}>
                        <Icon size={16}>{small[tool.icon]}</Icon>
                    </button>
                ))}
            </div>
            <div className="mt-auto h-px w-7 bg-[#e0e2ea]" />
            <button type="button" aria-label="更多工具" className="mt-4 mb-2.5">
                <Icon size={16}>
                    <circle cx="2.500" cy="8" r="1.500" />
                    <circle cx="8" cy="8" r="1.500" />
                    <circle cx="13.500" cy="8" r="1.500" />
                </Icon>
            </button>
        </aside>
    );
}

function StatusBar() {
    return (
        <footer className="h-[19px] shrink-0 overflow-hidden border-t border-[#e0e2ea] whitespace-nowrap">
            <div className="flex h-[26px] items-center">
                <button type="button" aria-label="宏" className="mr-[15px] ml-[15px]">
                    <Icon size={16}>{small.script}</Icon>
                </button>
                <Divider className="mr-[9px] h-4" />
                <button type="button" className="flex items-center gap-0.5">
                    <Icon size={16}>{small.wage}</Icon>
                    工资结算
                    <Caret className="ml-[7px] rotate-180" />
                </button>
                <div className="ml-4 flex gap-[11px]">
                    <span>平均值=1065</span>
                    <span>计数=23</span>
                    <span>求和=1万0650</span>
                </div>
                <div className="ml-auto flex items-center">
                    <button type="button" aria-label="护眼模式" className="mr-[7px]">
                        <Icon size={16}>{small.eye}</Icon>
                    </button>
                    <button type="button" aria-label="阅读模式" className="flex items-center gap-1">
                        <Icon size={16}>{small.cross}</Icon>
                        <Caret />
                    </button>
                    <Divider className="mx-3 h-4" />
                    <button type="button" aria-label="普通视图" className="flex h-6 w-[23px] items-center justify-center bg-[#dadfe6]">
                        <Icon size={16}>{small.gridView}</Icon>
                    </button>
                    <button type="button" aria-label="页面布局" className="ml-1.5">
                        <Icon size={16}>{small.pageView}</Icon>
                    </button>
                    <button type="button" aria-label="分页预览" className="ml-2.5">
                        <Icon size={16}>{small.breakView}</Icon>
                    </button>
                    <Divider className="mr-2.5 ml-3.5 h-4" />
                    <button type="button" className="flex items-center gap-1.5">
                        100%
                        <Caret />
                    </button>
                    <button type="button" aria-label="缩小" className="ml-3 h-0.5 w-2.5 bg-[#2c3145]" />
                    <input
                        type="range"
                        aria-label="显示比例"
                        defaultValue={50}
                        className="mx-3 h-px w-[138px] appearance-none bg-[linear-gradient(to_right,#3f4961_50%,#d3d6de_50%)] [&::-webkit-slider-thumb]:size-3 [&::-webkit-slider-thumb]:appearance-none [&::-webkit-slider-thumb]:rounded-full [&::-webkit-slider-thumb]:border [&::-webkit-slider-thumb]:border-[#555] [&::-webkit-slider-thumb]:bg-[#f0f0f0]"
                    />
                    <button type="button" aria-label="放大">
                        <Icon size={10}>
                            <path strokeWidth="2" d="M5 0v10M0 5h10" />
                        </Icon>
                    </button>
                    <button type="button" aria-label="全屏" className="mr-[11px] ml-3">
                        <Icon size={16}>{small.expand}</Icon>
                    </button>
                </div>
            </div>
        </footer>
    );
}

function SiteMark() {
    return (
        <div className="pointer-events-none absolute right-2.5 bottom-[7px] z-30 flex items-center opacity-85">
            <svg width="60" height="44" viewBox="0 0 60 44" aria-hidden="true" className="-mr-3.5">
                <defs>
                    <linearGradient id="swoosh" x1="0" y1="1" x2="1" y2="0">
                        <stop offset="0" stopColor="#3f7cc4" />
                        <stop offset=".6" stopColor="#4f9fe0" />
                        <stop offset="1" stopColor="#8fdcf5" />
                    </linearGradient>
                    <linearGradient id="leaf" x1="0" y1="1" x2="1" y2="0">
                        <stop offset="0" stopColor="#d9e26a" />
                        <stop offset=".5" stopColor="#5cc46e" />
                        <stop offset="1" stopColor="#3fb37a" />
                    </linearGradient>
                </defs>
                <path fill="url(#swoosh)" d="M42 2C22 4 3 15 2 28c0 6 5 10 13 9-5-2-7-6-5-11C13 17 26 9 42 2z" />
                <path fill="url(#swoosh)" d="M36 11C22 14 14 20 15 27c1 5 8 7 14 3 5-3 3-7-1-6 1 3-3 5-6 3-4-4 6-12 14-16z" />
                <path fill="url(#leaf)" d="M26 20c6-5 13-5 15 0 2 8-5 15-14 19-7 3-14 3-20 1 13 0 26-5 28-13 1-6-3-9-9-7z" />
            </svg>
            <div className="flex flex-col items-start">
                <span className="text-[21px] leading-[22px] font-bold text-[#4f97d8]">极光下载站</span>
                <span className="font-['Liberation_Sans',sans-serif] text-base leading-5 font-bold text-[#52c27c]">
                    www.xz7.com
                </span>
            </div>
        </div>
    );
}

export default function App() {
    return (
        <div className="relative flex h-screen flex-col overflow-hidden bg-[#f5f7f9] font-['Noto_Sans','Noto_Sans_CJK_SC',sans-serif] text-xs text-[#252a3a]">
            <TopBar />
            <Ribbon />
            <div className="flex min-h-0 flex-1">
                <main className="flex min-w-0 flex-1 flex-col">
                    <FormulaBar />
                    <div className="flex min-h-0 flex-1">
                        <Grid />
                        <VerticalScroll />
                    </div>
                    <SheetBar />
                </main>
                <SideBar />
            </div>
            <StatusBar />
            <SiteMark />
        </div>
    );
}
